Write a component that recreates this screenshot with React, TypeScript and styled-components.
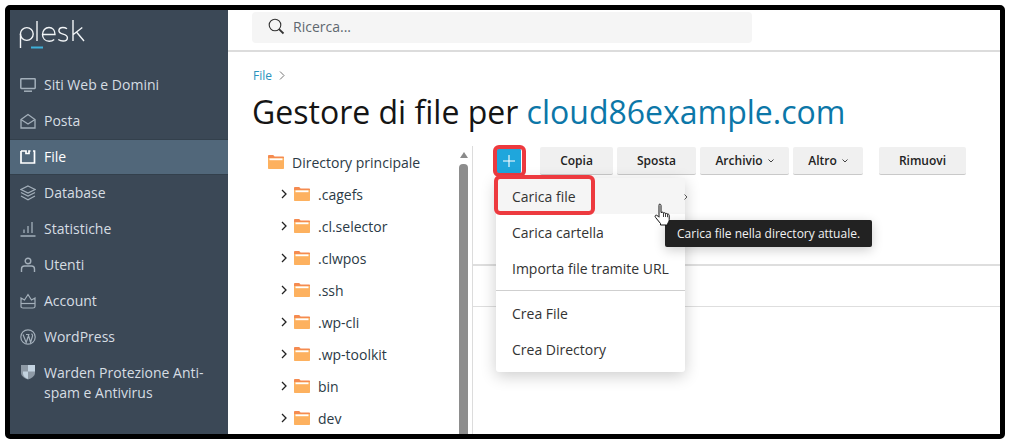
import React from 'react';
import styled, { createGlobalStyle } from 'styled-components';

const GlobalStyle = createGlobalStyle`
  html, body {
    margin: 0;
    padding: 0;
    background: #fff;
  }
  * {
    box-sizing: border-box;
  }
`;

const Page = styled.div`
  width: 1011px;
  height: 444px;
  padding: 5px 6px 5px 5px;
  background: #fff;
  font-family: 'Open Sans', sans-serif;
`;

const Frame = styled.div`
  position: relative;
  display: flex;
  width: 100%;
  height: 100%;
  border: 5px solid #000;
  border-radius: 5px;
  overflow: hidden;
`;

const Sidebar = styled.nav`
  flex: 0 0 218px;
  display: flex;
  flex-direction: column;
  background: #3b4856;
`;

const LogoBox = styled.div`
  height: 57px;
  padding: 4px 0 0 9px;
`;

const NavItem = styled.a<{ $active?: boolean }>`
  display: flex;
  align-items: center;
  min-height: 36px;
  padding: 0 16px 0 10px;
  font-size: 14px;
  line-height: 20px;
  color: ${(p) => (p.$active ? '#fff' : '#d6dde3')};
  font-weight: ${(p) => (p.$active ? 500 : 400)};
  background: ${(p) => (p.$active ? '#51677a' : 'transparent')};
  box-shadow: ${(p) => (p.$active ? 'inset 0 1px 0 #33404c, inset 0 -1px 0 #33404c' : 'none')};
`;

const NavWrap = styled(NavItem)`
  align-items: flex-start;
  padding-top: 8px;
`;

const NavIcon = styled.svg<{ $active?: boolean }>`
  flex: 0 0 16px;
  width: 16px;
  height: 16px;
  margin-right: 8px;
  fill: none;
  stroke: ${(p) => (p.$active ? '#fff' : '#a3afba')};
  stroke-width: 1.2;
`;

const ShieldIcon = styled(NavIcon)`
  margin-top: 1px;
`;

const Main = styled.main`
  flex: 1;
  display: flex;
  flex-direction: column;
  min-width: 0;
`;

const TopBar = styled.header`
  flex: 0 0 42px;
  padding: 2px 0 0 24px;
  border-bottom: 2px solid #dcdcdc;
`;

const SearchBox = styled.div`
  display: flex;
  align-items: center;
  gap: 8px;
  width: 500px;
  height: 31px;
  padding: 0 0 2px 16px;
  background: #f5f5f5;
  border-radius: 4px;
  font-size: 14px;
  color: #5f6870;
`;

const Breadcrumb = styled.div`
  display: flex;
  align-items: center;
  gap: 7px;
  height: 16px;
  margin: 15px 0 0 25px;
  font-size: 12px;
  color: #2a93bd;
`;

const Title = styled.h1`
  margin: 7px 0 0 24px;
  height: 44px;
  font-size: 32px;
  line-height: 44px;
  font-weight: 400;
  color: #151515;
  white-space: nowrap;
`;

const TitleLink = styled.span`
  color: #0c77a8;
`;

const Body = styled.div`
  flex: 1;
  display: flex;
  min-height: 0;
  margin-top: 12px;
`;

const Tree = styled.div`
  flex: 0 0 230px;
  padding: 0 0 0 40px;
  overflow: hidden;
`;

const TreeRow = styled.div<{ $root?: boolean }>`
  display: flex;
  align-items: center;
  height: 32px;
  margin-left: ${(p) => (p.$root ? '0' : '9px')};
  font-size: 14px;
  color: #2b3a46;
  white-space: nowrap;
`;

const Chevron = styled.svg`
  flex: 0 0 14px;
  width: 14px;
  height: 10px;
  margin-right: 3px;
  fill: none;
  stroke: #222;
  stroke-width: 1.3;
`;

const Folder = styled.svg`
  flex: 0 0 16px;
  width: 16px;
  height: 14px;
  margin-right: 8px;
`;

const ScrollTrack = styled.div`
  flex: 0 0 14px;
  display: flex;
  flex-direction: column;
  align-items: center;
  padding: 6px 3px 0 0;
  background: #fff;
`;

const ScrollArrow = styled.div`
  width: 0;
  height: 0;
  margin-bottom: 6px;
  border-left: 4px solid transparent;
  border-right: 4px solid transparent;
  border-bottom: 6px solid #8a8a8a;
`;

const ScrollThumb = styled.div`
  flex: 1;
  width: 9px;
  border-radius: 4px 4px 0 0;
  background: #8d8d8d;
`;

const FilesPane = styled.section`
  flex: 1;
  display: flex;
  flex-direction: column;
  border-left: 1px solid #dcdcdc;
  min-width: 0;
`;

const Toolbar = styled.div`
  display: flex;
  align-items: flex-start;
  height: 120px;
  padding: 1px 0 0 24px;
  border-bottom: 2px solid #dedede;
`;

const PlusButton = styled.button`
  display: flex;
  align-items: center;
  justify-content: center;
  width: 24px;
  height: 24px;
  margin: 2px 19px 0 0;
  padding: 0;
  border: 0;
  border-radius: 1px;
  background: #1fa6dc;
`;

const ToolButton = styled.button<{ $w: number; $gap?: number }>`
  display: flex;
  align-items: center;
  justify-content: center;
  gap: 5px;
  width: ${(p) => p.$w}px;
  height: 28px;
  margin-right: ${(p) => p.$gap ?? 4}px;
  padding: 0;
  border: 0;
  border-bottom: 1px solid #c9c9c9;
  border-radius: 2px;
  background: #f0f0f0;
  font-family: inherit;
  font-size: 12px;
  font-weight: 600;
  color: #222;
`;

const Caret = styled.svg`
  width: 6px;
  height: 4px;
  fill: none;
  stroke: #444;
  stroke-width: 1;
`;

const ListHead = styled.div`
  height: 41px;
  border-bottom: 1px solid #dedede;
`;

const Highlight = styled.div`
  position: absolute;
  border: 4px solid #ed3a3f;
  border-radius: 6px;
`;

const PlusMark = styled(Highlight)`
  left: 483px;
  top: 135px;
  width: 33px;
  height: 32px;
`;

const UploadMark = styled(Highlight)`
  left: 484px;
  top: 165px;
  width: 101px;
  height: 40px;
  z-index: 3;
`;

const Menu = styled.div`
  position: absolute;
  left: 486px;
  top: 168px;
  width: 189px;
  padding-bottom: 5px;
  background: #fff;
  border-radius: 3px;
  box-shadow: 0 4px 16px rgba(0, 0, 0, 0.2);
  z-index: 2;
`;

const MenuItem = styled.div<{ $hover?: boolean }>`
  display: flex;
  align-items: center;
  height: 36px;
  padding-left: 16px;
  font-size: 14px;
  color: #333;
  background: ${(p) => (p.$hover ? '#f5f5f5' : 'transparent')};
  white-space: nowrap;
`;

const MenuDivider = styled.div`
  height: 1px;
  margin: 4px 0;
  background: #cfcfcf;
`;

const MenuChevron = styled.svg`
  position: absolute;
  left: 188px;
  top: 16px;
  width: 4px;
  height: 6px;
  fill: none;
  stroke: #555;
`;

const Tooltip = styled.div`
  position: absolute;
  left: 655px;
  top: 210px;
  display: flex;
  align-items: center;
  width: 207px;
  height: 27px;
  padding-left: 12px;
  background: #222;
  border-radius: 2px;
  font-size: 12px;
  font-weight: 400;
  color: #f2f2f2;
  white-space: nowrap;
  box-shadow: 0 3px 12px rgba(0, 0, 0, 0.2);
  z-index: 4;
`;

const Cursor = styled.svg`
  position: absolute;
  left: 644px;
  top: 193px;
  width: 17px;
  height: 24px;
  z-index: 5;
`;

const navItems = [
  {
    label: 'Siti Web e Domini',
    icon: (
      <>
        <rect x="0.8" y="1.8" width="14.4" height="9.6" rx="0.6" strokeWidth="1.5" />
        <path d="M4 14.2h8" strokeWidth="1.5" />
      </>
    ),
  },
  {
    label: 'Posta',
    icon: (
      <>
        <path d="M1 6.5 8 1.5l7 5v8.5H1z" strokeWidth="1.3" />
        <path d="M1 6.5 8 11l7-4.5" strokeWidth="1.3" />
      </>
    ),
  },
  {
    label: 'File',
    active: true,
    icon: <path d="M1 2h5v2.500h3V2h1.500M13 2h1.500v12H1V2" strokeWidth="1.7" />,
  },
  {
    label: 'Database',
    icon: (
      <>
        <path d="M8 1 15 4.5 8 8 1 4.5z" />
        <path d="M1 7.5 8 11l7-3.5" />
        <path d="M1 11 8 14.7l7-3.7" />
      </>
    ),
  },
  {
    label: 'Statistiche',
    icon: <path d="M0.5 15h15M4 12V8.5M8 12V5M12 12V1" strokeWidth="1.3" />,
  },
  {
    label: 'Utenti',
    icon: (
      <>
        <circle cx="8" cy="4" r="2.8" strokeWidth="1.4" />
        <path d="M1.5 15v-3c0-2 1.5-3 3-3h7c1.5 0 3 1 3 3v3" strokeWidth="1.4" />
      </>
    ),
  },
  {
    label: 'Account',
    icon: (
      <>
        <path d="M1 5 4.5 7 8 1.5 11.5 7 15 5v8.5c0 1-1 1.5-2 1.5H3c-1 0-2-.5-2-1.5z" strokeWidth="1.2" />
        <path d="M1 10.5h14" strokeWidth="1.2" />
      </>
    ),
  },
  {
    label: 'WordPress',
    icon: (
      <>
        <circle cx="8" cy="8" r="7.2" />
        <path d="M3 5.5 6.2 13.5 8.2 7.5 M6 5.5h3.5M8.2 5.5l2.4 8 1.8-6c.4-1.2 0-2.3-1-2.6" />
      </>
    ),
  },
];

const treeItems = ['.cagefs', '.cl.selector', '.clwpos', '.ssh', '.wp-cli', '.wp-toolkit', 'bin', 'dev'];

function FolderIcon() {
  return (
    <Folder viewBox="0 0 16 14">
      <path d="M0 1.2C0 .5.4 0 1 0h4.2l1.4 1.6H15c.6 0 1 .4 1 1V3H0z" fill="#f58b50" />
      <path d="M0 3h16v10c0 .6-.4 1-1 1H1c-.6 0-1-.4-1-1z" fill="#fdb15f" />
      <path d="M1.5 3.400h13v1.800H1.500z" fill="#fff" />
    </Folder>
  );
}

export default function App() {
  return (
    <Page>
      <GlobalStyle />
      <Frame>
        <Sidebar>
          <LogoBox>
            <svg width="70" height="38" viewBox="0 0 70 38" fill="none" stroke="#f2f5f7" strokeWidth="1.4">
              <path d="M1.500 34V20" />
              <circle cx="7.800" cy="20" r="6.400" />
              <path d="M18 7v20" />
              <path d="M23.500 20.500h12.500c0-4-2.400-7-6-7-3.700 0-6.500 3-6.500 7s2.800 6.700 6.700 6.700c2 0 3.700-.6 5-1.700" />
              <path d="M48 14.800c-1.200-.9-2.800-1.300-4.200-1.300-2.300 0-3.900 1-3.900 3.200 0 4.400 8.500 2.600 8.500 7 0 2.300-1.900 3.300-4.300 3.300-1.700 0-3.400-.5-4.800-1.500" />
              <path d="M54 6v21M54.300 20.500l9-7M57.500 18 65 27" />
              <path d="M12 33.500h12" stroke="#3fb0d9" strokeWidth="2" />
            </svg>
          </LogoBox>
          {navItems.map((item) => (
            <NavItem key={item.label} $active={item.active}>
              <NavIcon viewBox="0 0 16 16" $active={item.active}>
                {item.icon}
              </NavIcon>
              {item.label}
            </NavItem>
          ))}
          <NavWrap>
            <ShieldIcon viewBox="0 0 16 16">
              <path d="M1 1h14v8c0 3-3.500 5.500-7 6.500C4.500 14.500 1 12 1 9z" fill="#8e9aa6" stroke="none" />
              <path d="M8 1h7v6.500H8z" fill="#c3d3e0" stroke="none" />
              <path d="M3 7.500h5V15C5 14 3 12 3 9.500z" fill="#c3d3e0" stroke="none" />
            </ShieldIcon>
            <span>Warden Protezione Anti-spam e Antivirus</span>
          </NavWrap>
        </Sidebar>
        <Main>
          <TopBar>
            <SearchBox>
              <svg width="17" height="17" viewBox="0 0 17 17" fill="none" stroke="#333">
                <circle cx="7" cy="7" r="5.8" strokeWidth="1.1" />
                <path d="M11 11.200 15.500 15.500" strokeWidth="1.800" />
              </svg>
              Ricerca...
            </SearchBox>
          </TopBar>
          <Breadcrumb>
            File
            <svg width="6" height="9" viewBox="0 0 6 9" fill="none" stroke="#777">
              <path d="M1 .5 5 4.500 1 8.500" />
            </svg>
          </Breadcrumb>
          <Title>
            Gestore di file per <TitleLink>cloud86example.com</TitleLink>
          </Title>
          <Body>
            <Tree>
              <TreeRow $root>
                <FolderIcon />
                Directory principale
              </TreeRow>
              {treeItems.map((name) => (
                <TreeRow key={name}>
                  <Chevron viewBox="0 0 14 10">
                    <path d="M5 1 9 5 5 9" />
                  </Chevron>
                  <FolderIcon />
                  {name}
                </TreeRow>
              ))}
            </Tree>
            <ScrollTrack>
              <ScrollArrow />
              <ScrollThumb />
            </ScrollTrack>
            <FilesPane>
              <Toolbar>
                <PlusButton>
                  <svg width="14" height="14" viewBox="0 0 14 14" stroke="#fff" strokeWidth="1.1">
                    <path d="M7 1v12M1 7h12" />
                  </svg>
                </PlusButton>
                <ToolButton $w={73}>Copia</ToolButton>
                <ToolButton $w={79}>Sposta</ToolButton>
                <ToolButton $w={89}>
                  Archivio
                  <Caret viewBox="0 0 6 4">
                    <path d="M.5 .5 3 3 5.500 .5" />
                  </Caret>
                </ToolButton>
                <ToolButton $w={70} $gap={16}>
                  Altro
                  <Caret viewBox="0 0 6 4">
                    <path d="M.5 .5 3 3 5.500 .5" />
                  </Caret>
                </ToolButton>
                <ToolButton $w={87}>Rimuovi</ToolButton>
              </Toolbar>
              <ListHead />
            </FilesPane>
          </Body>
        </Main>
        <PlusMark />
        <Menu>
          <MenuItem $hover>Carica file</MenuItem>
          <MenuItem>Carica cartella</MenuItem>
          <MenuItem>Importa file tramite URL</MenuItem>
          <MenuDivider />
          <MenuItem>Crea File</MenuItem>
          <MenuItem>Crea Directory</MenuItem>
          <MenuChevron viewBox="0 0 4 6">
            <path d="M.5 .5 3 3 .5 5.500" />
          </MenuChevron>
        </Menu>
        <UploadMark />
        <Tooltip>Carica file nella directory attuale.</Tooltip>
        <Cursor viewBox="0 0 17 24">
          <path
            d="M5 1.500c.9-.7 2-.2 2 1v7l1.200-.3c.6-.2 1.200.2 1.400.6.600-.3 1.500 0 1.700.6.700-.3 1.600 0 1.800.7.700-.4 2 0 2.100 1.200v4.200c0 1.600-.8 2.700-1.500 4v1.500H6.500v-1.500L1.600 14.500c-.9-1.200-.5-2 .2-2.300.9-.3 2 .7 3.200 2V2.500z"
            fill="#fff"
            stroke="#111"
            strokeWidth="1"
          />
          <path d="M9.500 10v4M11.500 10.500v3.500M13.500 11.200v3" fill="none" stroke="#111" strokeWidth="0.8" />
        </Cursor>
      </Frame>
    </Page>
  );
}
